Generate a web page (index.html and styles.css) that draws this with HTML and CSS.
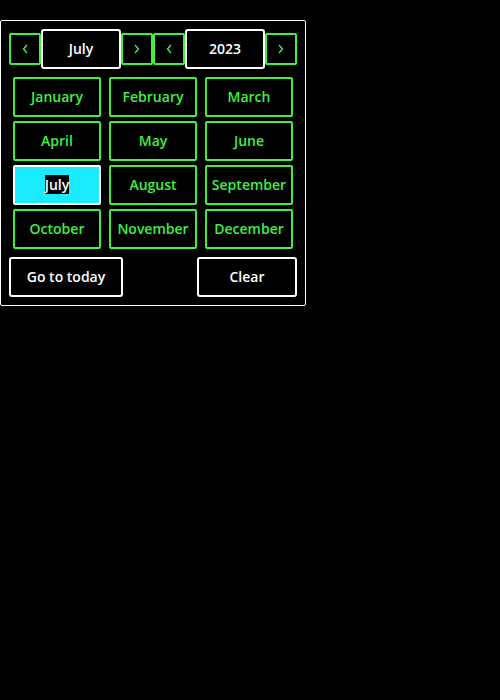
FILE: index.html
```html
<!DOCTYPE html>
<html>
<head>
<meta charset="utf-8">
<link rel="stylesheet" href="styles.css">
</head>
<body>
<div class="picker">
  <div class="header">
    <button class="nav"><svg width="6" height="10" viewBox="0 0 6 10"><path d="M5 1 L1.5 5 L5 9" fill="none" stroke="#3ff03f" stroke-width="1.4"/></svg></button>
    <div class="label">July</div>
    <button class="nav"><svg width="6" height="10" viewBox="0 0 6 10"><path d="M1 1 L4.5 5 L1 9" fill="none" stroke="#3ff03f" stroke-width="1.4"/></svg></button>
    <button class="nav"><svg width="6" height="10" viewBox="0 0 6 10"><path d="M5 1 L1.5 5 L5 9" fill="none" stroke="#3ff03f" stroke-width="1.4"/></svg></button>
    <div class="label">2023</div>
    <button class="nav"><svg width="6" height="10" viewBox="0 0 6 10"><path d="M1 1 L4.5 5 L1 9" fill="none" stroke="#3ff03f" stroke-width="1.4"/></svg></button>
  </div>
  <div class="grid">
    <button class="month">January</button>
    <button class="month">February</button>
    <button class="month">March</button>
    <button class="month">April</button>
    <button class="month">May</button>
    <button class="month">June</button>
    <button class="month selected"><span>July</span></button>
    <button class="month">August</button>
    <button class="month">September</button>
    <button class="month">October</button>
    <button class="month">November</button>
    <button class="month">December</button>
  </div>
  <div class="footer">
    <button class="action today">Go to today</button>
    <button class="action clear">Clear</button>
  </div>
</div>
</body>
</html>
```
FILE: styles.css
```css
html, body {
  margin: 0;
  padding: 0;
  background: #000;
}
body {
  padding-top: 20px;
  font-family: "Open Sans", sans-serif;
  font-weight: 600;
  font-size: 14px;
}
.picker {
  box-sizing: border-box;
  width: 306px;
  border: 1px solid #fff;
  border-radius: 2px;
  padding: 8px;
  background: #000;
}
button {
  font-family: inherit;
  font-weight: inherit;
  font-size: inherit;
  margin: 0;
  padding: 0;
  background: #000;
  cursor: pointer;
}
.header {
  display: flex;
  align-items: center;
  height: 40px;
}
.nav {
  box-sizing: border-box;
  width: 32px;
  height: 32px;
  border: 2px solid #3ff03f;
  border-radius: 2px;
  display: flex;
  align-items: center;
  justify-content: center;
}
.label {
  box-sizing: border-box;
  width: 80px;
  height: 40px;
  border: 2px solid #fff;
  border-radius: 3px;
  color: #fff;
  padding-bottom: 2px;
  display: flex;
  align-items: center;
  justify-content: center;
}
.grid {
  display: grid;
  grid-template-columns: repeat(3, 88px);
  column-gap: 8px;
  row-gap: 4px;
  padding: 8px 4px;
}
.month {
  box-sizing: border-box;
  height: 40px;
  border: 2px solid #3ff03f;
  border-radius: 2px;
  color: #3ff03f;
  padding-bottom: 2px;
  display: flex;
  align-items: center;
  justify-content: center;
}
.month.selected {
  background: #1aebff;
  border-color: #fff;
}
.month.selected span {
  background: #000;
  color: #fff;
}
.footer {
  display: flex;
  justify-content: space-between;
}
.action {
  box-sizing: border-box;
  height: 40px;
  border: 2px solid #fff;
  border-radius: 3px;
  color: #fff;
  padding-bottom: 2px;
}
.today {
  width: 114px;
}
.clear {
  width: 100px;
}
```
